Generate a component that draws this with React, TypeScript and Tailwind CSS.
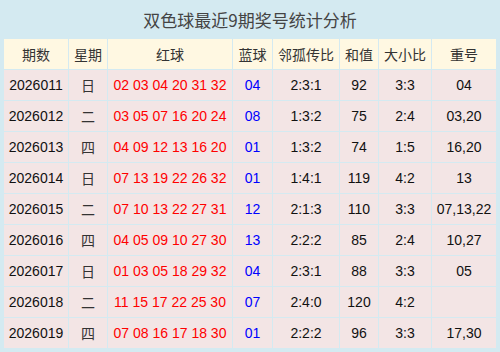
const rows: [string, string, string, string, string, string, string, string][] = [
    ["2026011", "日", "02 03 04 20 31 32", "04", "2:3:1", "92", "3:3", "04"],
    ["2026012", "二", "03 05 07 16 20 24", "08", "1:3:2", "75", "2:4", "03,20"],
    ["2026013", "四", "04 09 12 13 16 20", "01", "1:3:2", "74", "1:5", "16,20"],
    ["2026014", "日", "07 13 19 22 26 32", "01", "1:4:1", "119", "4:2", "13"],
    ["2026015", "二", "07 10 13 22 27 31", "12", "2:1:3", "110", "3:3", "07,13,22"],
    ["2026016", "四", "04 05 09 10 27 30", "13", "2:2:2", "85", "2:4", "10,27"],
    ["2026017", "日", "01 03 05 18 29 32", "04", "2:3:1", "88", "3:3", "05"],
    ["2026018", "二", "11 15 17 22 25 30", "07", "2:4:0", "120", "4:2", ""],
    ["2026019", "四", "07 08 16 17 18 30", "01", "2:2:2", "96", "3:3", "17,30"],
]

const heads = ["期数", "星期", "红球", "蓝球", "邻孤传比", "和值", "大小比", "重号"]

const cjk = "font-['Noto_Sans_CJK_SC',sans-serif]"
const num = "font-['Liberation_Sans','Noto_Sans_CJK_SC',sans-serif]"

const App = () => {
    return (
        <div className="w-[500px] h-[352px] bg-[#d4eaf1] px-1 pb-1 overflow-hidden">
            {/* title */}
            <div className={`h-[39px] flex items-center justify-center text-[17px] text-[#444] ${cjk}`}>
                双色球最近9期奖号统计分析
            </div>

            {/* table */}
            <div className="grid grid-cols-[64px_38px_124px_39px_66px_38px_52px_64px] auto-rows-[30px] gap-px">
                {heads.map((h) => (
                    <div key={h} className={`bg-[#fff8e2] flex items-center justify-center text-[14px] text-[#333] ${cjk}`}>{h}</div>
                ))}
                {rows.map((r) => (
                    <div key={r[0]} className="contents">
                        <div className={`bg-[#f3e5e5] flex items-center justify-center text-[14px] text-[#111] ${num}`}>{r[0]}</div>
                        <div className={`bg-[#f3e5e5] flex items-center justify-center text-[14px] text-[#333] ${cjk}`}>{r[1]}</div>
                        <div className={`bg-[#f3e5e5] flex items-center justify-center text-[14px] text-[#ff0000] ${num}`}>{r[2]}</div>
                        <div className={`bg-[#f3e5e5] flex items-center justify-center text-[14px] text-[#0000ff] ${num}`}>{r[3]}</div>
                        <div className={`bg-[#f3e5e5] flex items-center justify-center text-[14px] text-[#111] ${num}`}>{r[4]}</div>
                        <div className={`bg-[#f3e5e5] flex items-center justify-center text-[14px] text-[#111] ${num}`}>{r[5]}</div>
                        <div className={`bg-[#f3e5e5] flex items-center justify-center text-[14px] text-[#111] ${num}`}>{r[6]}</div>
                        <div className={`bg-[#f3e5e5] flex items-center justify-center text-[14px] text-[#111] ${num}`}>{r[7]}</div>
                    </div>
                ))}
            </div>
        </div>
    )
}

export default App
